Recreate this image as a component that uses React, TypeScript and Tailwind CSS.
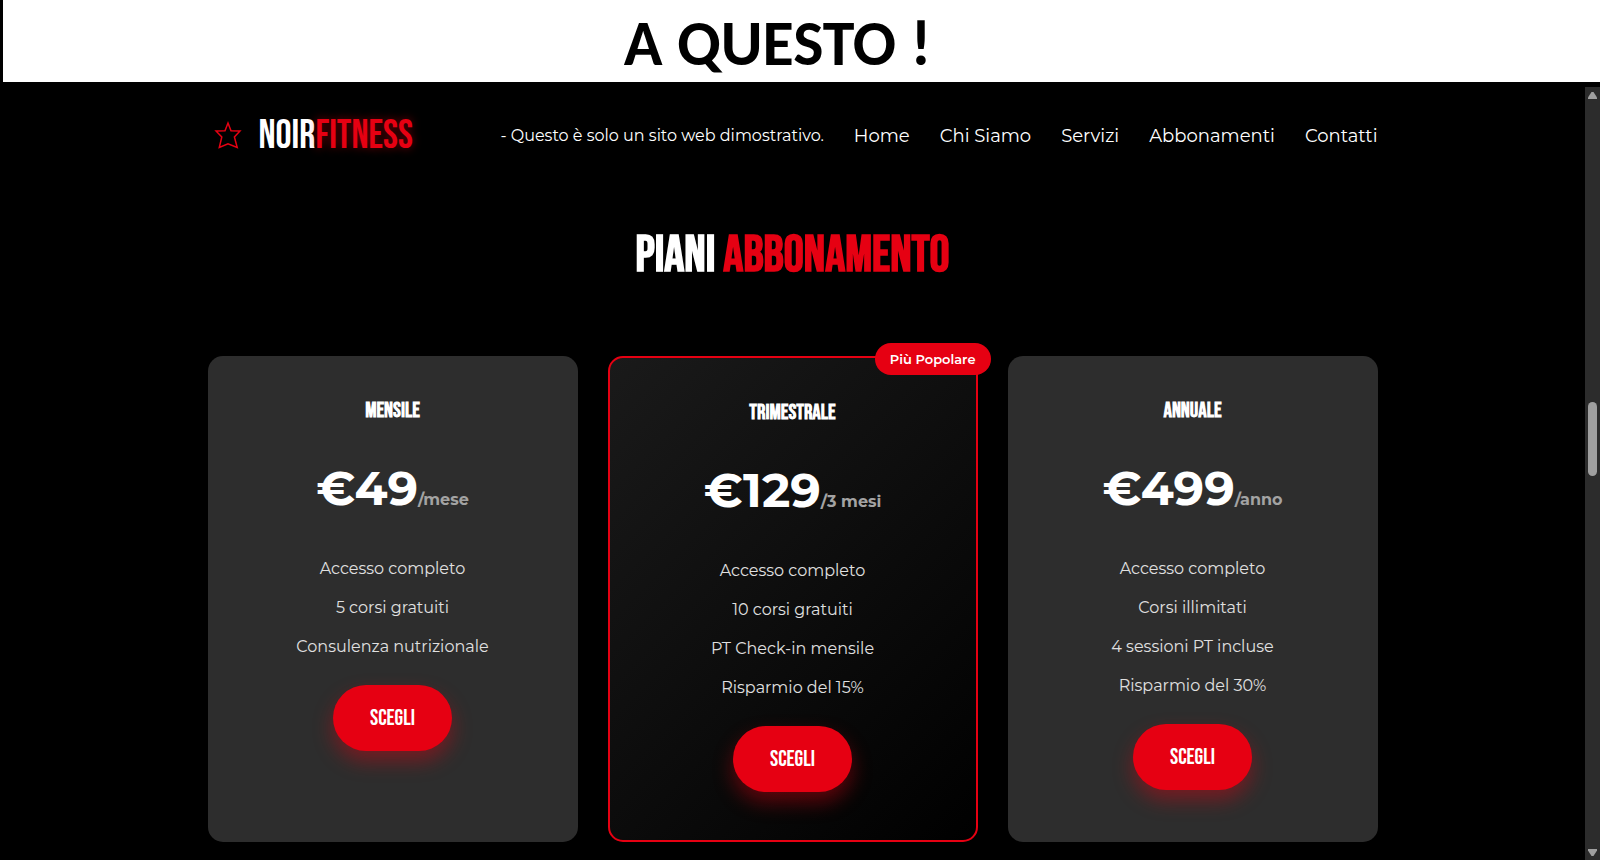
import clsx from "clsx";

const display = "font-['Bebas_Neue','Roboto_Condensed','Liberation_Sans_Narrow',sans-serif]";

const links = ["Home", "Chi Siamo", "Servizi", "Abbonamenti", "Contatti"];

const plans = [
  {
    name: "MENSILE",
    price: "€49",
    period: "/mese",
    features: ["Accesso completo", "5 corsi gratuiti", "Consulenza nutrizionale"],
  },
  {
    name: "TRIMESTRALE",
    price: "€129",
    period: "/3 mesi",
    features: ["Accesso completo", "10 corsi gratuiti", "PT Check-in mensile", "Risparmio del 15%"],
    popular: true,
  },
  {
    name: "ANNUALE",
    price: "€499",
    period: "/anno",
    features: ["Accesso completo", "Corsi illimitati", "4 sessioni PT incluse", "Risparmio del 30%"],
  },
];

function Header() {
  return (
    <header className="mx-auto flex h-[98px] w-full max-w-[1170px] items-center justify-between">
      <a href="#home" className="flex items-center">
        <svg width="38" height="38" viewBox="0 0 38 38" fill="none" stroke="#e60012" strokeWidth="1.5" className="mr-[13px]">
          <path d="M20 6 L23 13.7 L32 14 L26.4 20 L29.2 30.5 L20 26.7 L11.3 30.5 L13.8 20 L8 14 L17 13.7 Z" />
        </svg>
        <span className={clsx(display, "text-[40px] leading-[48px] text-white")}>
          NOIR<span className="text-[#e60012] [text-shadow:0_0_10px_rgba(230,0,18,0.5)]">FITNESS</span>
        </span>
      </a>
      <nav className="flex items-center gap-[30px] text-white">
        <span className="text-base">- Questo è solo un sito web dimostrativo.</span>
        {links.map((link) => (
          <a key={link} href={`#${link}`} className="text-lg">{link}</a>
        ))}
      </nav>
    </header>
  );
}

function PlanCard({ plan }: { plan: any }) {
  return (
    <div
      className={clsx(
        "relative flex flex-col items-center rounded-[15px] px-[30px] pt-10 pb-12 text-center",
        plan.popular ? "border-2 border-[#e60012] bg-[linear-gradient(135deg,#1a1a1a,#000)]" : "bg-[#2d2d2d]"
      )}
    >
      {plan.popular && (
        <span className="absolute -top-[15px] -right-[15px] rounded-full bg-[#e60012] px-[15px] text-[13px] leading-8 font-semibold text-white">
          Più Popolare
        </span>
      )}
      <h3 className={clsx(display, "text-[21px] leading-[30px] font-bold text-white")}>{plan.name}</h3>
      <p className="mt-[22px] text-5xl leading-[80px] font-bold text-white">
        {plan.price}<span className="text-base text-[#a3a3a3]">{plan.period}</span>
      </p>
      <ul className="mt-[21px] text-base leading-[39px] text-[#e0e0e0]">
        {plan.features.map((feature: string) => (
          <li key={feature}>{feature}</li>
        ))}
      </ul>
      <button
        type="button"
        className={clsx(display, "mt-[19px] h-[66px] rounded-full bg-[#e60012] px-[37px] text-[22px] text-white shadow-[0_10px_20px_rgba(230,0,18,0.4)]")}
      >
        SCEGLI
      </button>
    </div>
  );
}

function Scrollbar() {
  return (
    <div className="flex w-[15px] shrink-0 flex-col items-center bg-[#2c2c2c] pt-[5px] pb-1">
      <svg width="9" height="7" viewBox="0 0 9 7" fill="#9f9f9f">
        <path d="M3.5 0 H5.5 L9 5.5 V7 H0 V5.5 Z" />
      </svg>
      <div className="grow-[303]" />
      <div className="h-[74px] w-[9px] rounded-full bg-[#9f9f9f]" />
      <div className="grow-[373]" />
      <svg width="9" height="7" viewBox="0 0 9 7" fill="#9f9f9f">
        <path d="M3.5 7 H5.5 L9 1.5 V0 H0 V1.5 Z" />
      </svg>
    </div>
  );
}

export default function App() {
  return (
    <div className="flex min-h-screen flex-col bg-black font-['Montserrat','Inter',sans-serif]">
      <div className="mb-[5px] ml-[3px] flex h-[82px] items-center justify-center bg-white pt-1 pr-12">
        <h1 className="font-['Calibri','Carlito','Lato',sans-serif] text-[64px] leading-[78px] font-bold text-black">A QUESTO !</h1>
      </div>
      <div className="flex grow">
        <div className="flex min-w-0 grow flex-col pb-[18px]">
          <Header />
          <h2 className={clsx(display, "mt-9 text-center text-[50px] leading-[70px] font-bold text-white")}>
            PIANI <span className="text-[#e60012]">ABBONAMENTO</span>
          </h2>
          <div className="mx-auto mt-[65px] grid w-full max-w-[1170px] grid-cols-3 gap-[30px]">
            {plans.map((plan) => (
              <PlanCard key={plan.name} plan={plan} />
            ))}
          </div>
        </div>
        <Scrollbar />
      </div>
    </div>
  );
}
